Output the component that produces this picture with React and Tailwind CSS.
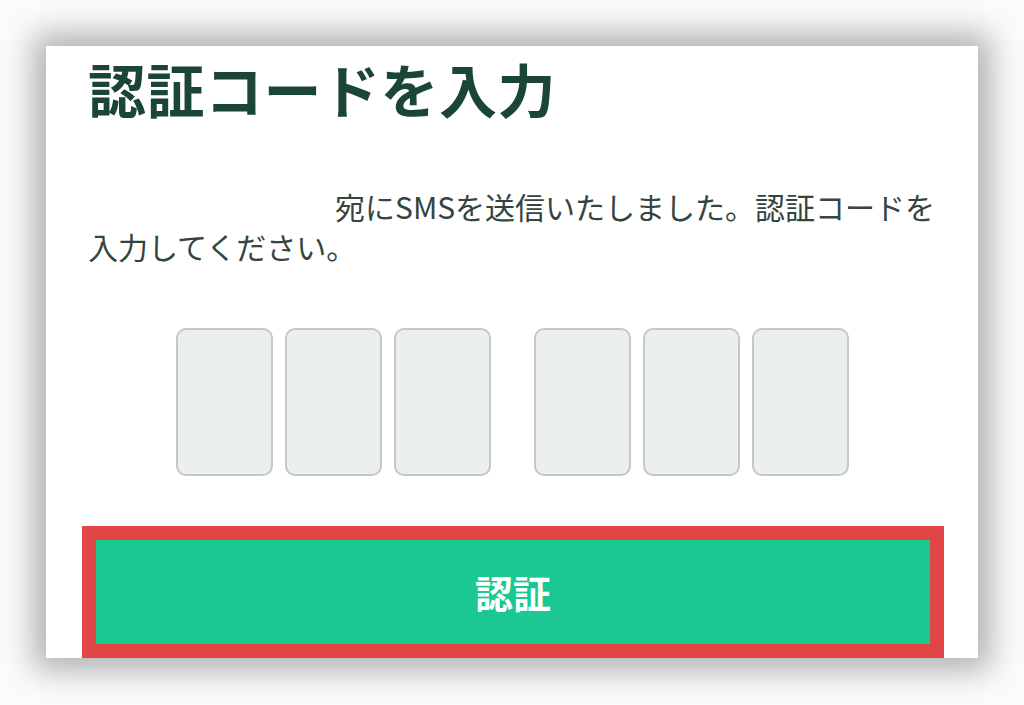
const CodeBox = () => (
  <div className="w-[97px] h-[148px] rounded-[10px] border-2 border-[#c6c8c7] bg-[#ebefee]" />
);

export default function App() {
  const font = { fontFamily: '"Noto Sans CJK JP", "Noto Sans", sans-serif' };

  return (
    <div className="w-[1024px] h-[705px] bg-[#fbfbfb] pt-[46px] px-[46px]" style={font}>
      <div className="relative h-[612px] bg-white overflow-hidden shadow-[0_0_30px_12px_rgba(0,0,0,0.3)]">
        <h1 className="pl-[42px] pt-[10px] text-[58px] leading-[64px] font-bold text-[#1b4534] tracking-[0.5px]">
          認証コードを入力
        </h1>

        <p className="mt-[66px] pl-[42px] text-[30px] leading-[40px] text-[#34443e] whitespace-nowrap">
          <span className="inline-block w-[247px]" />
          宛にSMSを送信いたしました。認証コードを
          <br />
          入力してください。
        </p>

        <div className="mt-[62px] flex justify-center gap-[43px]">
          <div className="flex gap-[12px]">
            <CodeBox />
            <CodeBox />
            <CodeBox />
          </div>
          <div className="flex gap-[12px]">
            <CodeBox />
            <CodeBox />
            <CodeBox />
          </div>
        </div>

        <div className="mt-[50px] ml-[36px] mr-[34px] h-[132px] border-[14px] border-[#e24545] bg-[#1bc891] flex items-center justify-center">
          <span className="text-white text-[38px] leading-[38px] font-bold">認証</span>
        </div>
      </div>
    </div>
  );
}
